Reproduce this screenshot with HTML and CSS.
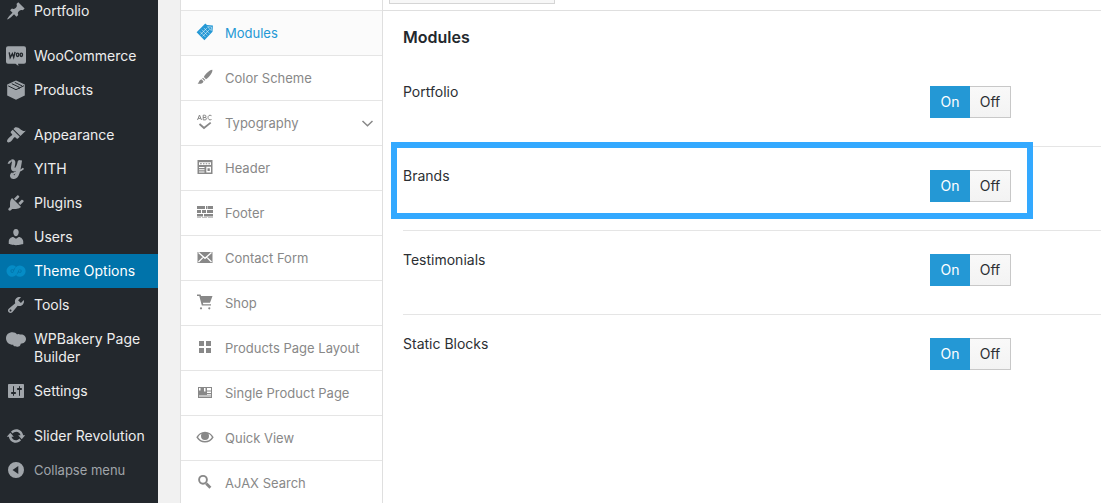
FILE: index.html
```html
<!DOCTYPE html>
<html lang="en">
<head>
<meta charset="utf-8">
<title>Theme Options</title>
<link rel="stylesheet" href="styles.css">
</head>
<body>
<div class="app">
  <nav class="admin" aria-label="Main menu">
    <ul class="admin-list">
      <li><a class="admin-link" href="#"><svg class="admin-icon" viewBox="0 0 20 20"><path d="M10.44 3.02l1.82-1.82 6.36 6.35-1.83 1.82c-1.05-.68-2.48-.57-3.41.36l-.75.75c-.92.93-1.04 2.35-.35 3.41l-1.83 1.82-2.41-2.41-2.8 2.79c-.42.42-3.38 2.71-3.8 2.29s1.86-3.39 2.28-3.81l2.79-2.79L4.1 9.36l1.83-1.82c1.05.69 2.48.57 3.4-.36l.75-.75c.93-.92 1.05-2.35.36-3.41z"/></svg><span>Portfolio</span></a></li>
      <li class="gap"><a class="admin-link" href="#"><svg class="admin-icon" viewBox="0 0 20 20"><path d="M2 .3h16a2 2 0 0 1 2 2v13.400a2 2 0 0 1-2 2h-6l.5 2.300-3-2.300H2a2 2 0 0 1-2-2V2.300a2 2 0 0 1 2-2z"/><path class="cut" d="M3.200 6.400l1 5.200 2.200-4 1.300 3.800 1.400-5.600"/><ellipse class="cut" cx="11.600" cy="8.800" rx="1.200" ry="1.700"/><ellipse class="cut" cx="15.300" cy="8.800" rx="1.200" ry="1.700"/></svg><span>WooCommerce</span></a></li>
      <li><a class="admin-link" href="#"><svg class="admin-icon" viewBox="0 0 20 20"><path d="M10 .4l8.800 4.200v10.800L10 19.800 1.200 15.400V4.600z"/><path class="cut thin" d="M2.200 5.900L10 9.700l8-4M5.800 3.700l7.400 3.500v1.600M8.800 2.400l7.300 3.500"/></svg><span>Products</span></a></li>
      <li class="gap"><a class="admin-link" href="#"><svg class="admin-icon" viewBox="0 0 20 20"><path d="M14.480 11.060L7.410 3.990l1.500-1.500c.5-.56 2.300-.47 3.510.32 1.210.8 1.430 1.280 2.910 2.100 1.180.64 2.450 1.260 4.450.85zm-.71.71L6.700 4.700 4.930 6.470c-.39.39-.39 1.020 0 1.410l1.060 1.060c.39.39.39 1.030 0 1.420-.6.6-1.430 1.110-2.210 1.690-.35.26-.7.53-1.010.84C1.430 14.230.4 16.080 1.400 17.070c.99 1 2.840-.03 4.180-1.360.31-.31.58-.66.85-1.020.57-.78 1.080-1.610 1.690-2.210.39-.39 1.020-.39 1.410 0l1.060 1.060c.39.39 1.020.39 1.410 0z"/></svg><span>Appearance</span></a></li>
      <li><a class="admin-link" href="#"><svg class="admin-icon" viewBox="0 0 20 20"><g class="stroke"><path stroke-width="3.600" d="M5.600 2.400c2-.8 2.300.5 1.700 3.200-.8 3.500-.6 5.200 1 5.200 2.300 0 4.200-3.500 5.300-8.500M14.300 1.200c-1.300 7.500-2.100 16.600-6.400 17-2.600.2-2.800-2.100-.8-3.400"/><path stroke-width="1.800" d="M2.400 4.800c.6-1.600 1.600-2.600 3-2.800M7 15c3.200-2.300 7.800-3 10.500-5.700"/></g></svg><span>YITH</span></a></li>
      <li><a class="admin-link" href="#"><svg class="admin-icon" viewBox="0 0 20 20"><path d="M13.110 4.360L9.870 7.600 8 5.730l3.240-3.240c.35-.34 1.050-.2 1.560.32.52.51.66 1.210.31 1.550zm-8 1.770l.91-1.120 9.010 9.010-1.190.84c-.71.71-2.630 1.160-3.820 1.160H6.140L4.900 17.260c-.59.59-1.540.59-2.120 0-.59-.58-.59-1.530 0-2.120l1.240-1.240v-3.880c0-1.130.4-3.190 1.090-3.890zm7.260 3.970l3.240-3.240c.34-.35 1.040-.21 1.550.31.52.51.66 1.210.31 1.550l-3.240 3.250z"/></svg><span>Plugins</span></a></li>
      <li><a class="admin-link" href="#"><svg class="admin-icon" viewBox="0 0 20 20"><path d="M10 9.250c-2.270 0-2.730-3.440-2.730-3.440C7 4.020 7.820 2 9.970 2c2.160 0 2.980 2.020 2.710 3.810 0 0-.41 3.440-2.680 3.440zm0 2.570L12.720 10c2.390 0 4.520 2.330 4.520 4.530v2.490s-3.650 1.130-7.240 1.130c-3.650 0-7.240-1.130-7.240-1.130v-2.490c0-2.250 1.940-4.480 4.470-4.480z"/></svg><span>Users</span></a></li>
      <li><a class="admin-link current" href="#" aria-current="page"><svg class="admin-icon" viewBox="0 0 20 20"><g class="stroke" stroke-width="4"><path d="M8.600 7.200a3.700 3.700 0 1 0 .2 5.400l2.400-5a3.700 3.700 0 1 1 .2 5.200"/></g><circle cx="6.300" cy="10" r="1" fill="currentColor"/><circle cx="13.800" cy="10" r="1" fill="currentColor"/></svg><span>Theme Options</span></a></li>
      <li><a class="admin-link" href="#"><svg class="admin-icon" viewBox="0 0 20 20"><path d="M16.680 9.770c-1.340 1.340-3.300 1.670-4.950.99l-5.410 6.520c-.99.99-2.590.99-3.580 0s-.99-2.590 0-3.570l6.520-5.420c-.68-1.650-.35-3.610.99-4.950 1.280-1.280 3.120-1.620 4.720-1.060l-2.890 2.890 2.820 2.820 2.860-2.870c.53 1.580.18 3.390-1.080 4.650zM3.810 16.210c.4.39 1.040.39 1.430 0 .4-.4.4-1.040 0-1.430-.39-.4-1.030-.4-1.430 0-.39.39-.39 1.030 0 1.430z"/></svg><span>Tools</span></a></li>
      <li><a class="admin-link" href="#"><svg class="admin-icon" viewBox="0 0 20 20"><path d="M6.500 3.200c2 0 3.500.8 4.600 2.200 1-.7 2-.6 3 .1 3-.6 5.900 1.300 5.900 4.500 0 2.700-2.300 4.600-5.300 4.700-.2 1.600-.7 2.500-2.200 2.700-1 .5-2.200.4-3-.1-1.300.1-2.100-.5-2.300-1.600C3 15.700 0 13 0 9.200 0 5.500 2.700 3.200 6.500 3.200z"/></svg><span>WPBakery Page Builder</span></a></li>
      <li><a class="admin-link" href="#"><svg class="admin-icon" viewBox="0 0 20 20"><path d="M18 16V4c0-.55-.45-1-1-1H3c-.55 0-1 .45-1 1v12c0 .55.45 1 1 1h14c.55 0 1-.45 1-1zM8 11h1c.55 0 1 .45 1 1s-.45 1-1 1H8v1.500c0 .28-.22.5-.5.5s-.5-.22-.5-.5V13H6c-.55 0-1-.45-1-1s.45-1 1-1h1V5.500c0-.28.22-.5.5-.5s.5.22.5.5V11zm5-2h-1c-.55 0-1-.45-1-1s.45-1 1-1h1V5.500c0-.28.22-.5.5-.5s.5.22.5.5V7h1c.55 0 1 .45 1 1s-.45 1-1 1h-1v5.500c0 .28-.22.5-.5.5s-.5-.22-.5-.5V9z"/></svg><span>Settings</span></a></li>
      <li class="gap"><a class="admin-link" href="#"><svg class="admin-icon" viewBox="0 0 20 20"><path d="M10.200 3.280c3.530 0 6.430 2.610 6.920 6h2.080l-3.500 4-3.500-4h2.320c-.45-1.970-2.210-3.450-4.320-3.450-1.450 0-2.730.71-3.540 1.780L4.950 5.660C6.230 4.200 8.110 3.280 10.200 3.280zm-.4 13.440c-3.520 0-6.430-2.610-6.920-6H.8l3.500-4c1.170 1.330 2.330 2.670 3.500 4H5.480c.45 1.970 2.210 3.450 4.320 3.450 1.450 0 2.730-.71 3.540-1.780l1.710 1.950c-1.280 1.460-3.150 2.380-5.250 2.380z"/></svg><span>Slider Revolution</span></a></li>
      <li><button class="admin-link collapse" type="button"><svg class="admin-icon" viewBox="0 0 20 20"><path fill-rule="evenodd" d="M10 2a8 8 0 1 1 0 16 8 8 0 0 1 0-16zM12.300 6L6.500 10l5.800 4z"/></svg><span>Collapse menu</span></button></li>
    </ul>
  </nav>

  <nav class="sections" aria-label="Option sections">
    <ul class="section-list">
      <li><a class="section-link active" href="#"><svg class="section-icon" viewBox="0 0 18 18"><path d="M9.300.6l1.700 1.500 5.900.4-.4 6.200L8.400 17.200.6 9.200z"/><path class="cut thin" d="M11.500 3.700l4 .3-.3 3.500-2-2zM4 8.500l5.500 5.600M5.900 6.700l5.600 5.700M7.800 4.900l5.600 5.700M4.500 11.500l6.500-6.600M6.500 13.500l7-7"/></svg><span>Modules</span></a></li>
      <li><a class="section-link" href="#"><svg class="section-icon" viewBox="0 0 18 18"><path d="M16.300 1.800c.4.500-.1 2.800-1.900 5.200-1.300 1.700-3 3.300-4.400 4.200L7.800 8.900c1-1.700 2.600-3.600 4.200-4.900 2-1.700 3.900-2.600 4.300-2.200zM7 9.700l2.300 2.200-.9.900-2.300-2.200zM5.400 11.200l2.100 2.100c-.5 2.300-3.200 3-6 2.300 1.600-.8 1.300-3.500 3.900-4.400z"/></svg><span>Color Scheme</span></a></li>
      <li><a class="section-link" href="#"><svg class="section-icon" viewBox="0 0 18 18"><g class="stroke" stroke-width="1"><path d="M1.500 7l2-5 2 5M2.200 5.400h2.600M7.200 2.200h1.600a1.100 1.100 0 0 1 0 2.300H7.200zM7.200 4.500h2a1.200 1.200 0 0 1 0 2.400h-2zM15.500 2.700c-2-1.200-3.500 0-3.500 1.800s1.500 3.100 3.500 2"/><path stroke-width="1.800" d="M3.500 11l4.500 4 6.700-5.400"/></g></svg><span class="section-name">Typography</span><svg class="chevron" viewBox="0 0 12 12"><path d="M1.500 4L6.500 8.800l5-4.800"/></svg></a></li>
      <li><a class="section-link" href="#"><svg class="section-icon" viewBox="0 0 18 18"><path fill-rule="evenodd" d="M1.500 2h15v14h-15zM3 4.300h12V7H3zM3 9h5.500v1H3zM3 11.200h5.500v1H3zM3 13.500h5.500v1H3zM10.300 8.800H15v5.700h-4.700zM11.500 10.300h2.300v2.700h-2.300z"/><path d="M4 5.200h1.800v1H4zM7 5.200h1.500v1H7zM9.700 5.200h1.500v1H9.700zM12.400 5.200h1.600v1h-1.600z"/></svg><span>Header</span></a></li>
      <li><a class="section-link" href="#"><svg class="section-icon" viewBox="0 0 18 18"><path d="M1 3h8v3H1zM10 3h1.500v3H10zM12 3h5v3h-5zM1 7h4v3H1zM6 7h4v3H6zM11 7h6v3h-6zM1 11h6v2.500H1zM8 11h9v2.500H8z"/><path opacity=".5" d="M1 14h4v1H1zM6 14h5v1H6zM12 14h5v1h-5z"/></svg><span>Footer</span></a></li>
      <li><a class="section-link" href="#"><svg class="section-icon" viewBox="0 0 18 18"><path d="M1.500 4h15v11h-15z"/><path class="cut" d="M2.500 4.500L9 10.300l6.500-5.800M2.500 14l4.800-4.900M15.500 14l-4.800-4.900"/></svg><span>Contact Form</span></a></li>
      <li><a class="section-link" href="#"><svg class="section-icon" viewBox="0 0 18 18"><path d="M1 1.400h3.500l.6 1.500H16.500L14 9.800H6.900l.3 1.400H15v1.400H5.800L3.300 2.900H1z"/><circle cx="5" cy="15.300" r="1.100"/><circle cx="13.300" cy="15.300" r="1.100"/></svg><span>Shop</span></a></li>
      <li><a class="section-link" href="#"><svg class="section-icon" viewBox="0 0 18 18"><path d="M3 3h5v5H3zM10 3h5v5h-5zM3 10h5v5H3zM10 10h5v5h-5z"/></svg><span>Products Page Layout</span></a></li>
      <li><a class="section-link" href="#"><svg class="section-icon" viewBox="0 0 18 18"><path fill-rule="evenodd" d="M2 4h14v11H2zM11 5h4v2.500h-4zM11 8.500h4v1.500h-4zM3 12.500h12v1H3zM3 5h1.500v2.500H3zM8 5h1.500v3.500H8zM11 11h4v.800h-4z"/></svg><span>Single Product Page</span></a></li>
      <li><a class="section-link" href="#"><svg class="section-icon" viewBox="0 0 18 18"><path fill-rule="evenodd" d="M.3 9.200C2.300 5.800 5.300 3.700 9 3.700s6.700 2.100 8.700 5.500c-2 3.400-5 5.300-8.700 5.300S2.300 12.600.3 9.200zM2.100 9.200C3.900 11.900 6.200 13 9 13s5.100-1.100 6.900-3.800c-1-1.600-2.200-2.700-3.500-3.400.4.700.6 1.400.6 2.200a4 4 0 1 1-8 0c0-.8.200-1.500.6-2.200-1.300.7-2.500 1.800-3.500 3.400z"/></svg><span>Quick View</span></a></li>
      <li><a class="section-link" href="#"><svg class="section-icon" viewBox="0 0 18 18"><g class="stroke"><circle cx="7" cy="6.800" r="3.900" stroke-width="1.900"/><path stroke-width="2.800" d="M10.200 10.400l4.200 4.300"/></g></svg><span>AJAX Search</span></a></li>
    </ul>
  </nav>

  <main class="content">
    <div class="toolbar"><button class="toolbar-button" type="button" aria-label="Toolbar action"></button></div>
    <div class="panel">
      <h1 class="title">Modules</h1>
      <div class="option">
        <span class="option-name" id="n1">Portfolio</span>
        <div class="switch" role="radiogroup" aria-labelledby="n1"><input type="radio" name="portfolio" id="r1a" checked><label for="r1a">On</label><input type="radio" name="portfolio" id="r1b"><label for="r1b">Off</label></div>
      </div>
      <div class="option highlighted">
        <span class="option-name" id="n2">Brands</span>
        <div class="switch" role="radiogroup" aria-labelledby="n2"><input type="radio" name="brands" id="r2a" checked><label for="r2a">On</label><input type="radio" name="brands" id="r2b"><label for="r2b">Off</label></div>
      </div>
      <div class="option">
        <span class="option-name" id="n3">Testimonials</span>
        <div class="switch" role="radiogroup" aria-labelledby="n3"><input type="radio" name="testimonials" id="r3a" checked><label for="r3a">On</label><input type="radio" name="testimonials" id="r3b"><label for="r3b">Off</label></div>
      </div>
      <div class="option">
        <span class="option-name" id="n4">Static Blocks</span>
        <div class="switch" role="radiogroup" aria-labelledby="n4"><input type="radio" name="blocks" id="r4a" checked><label for="r4a">On</label><input type="radio" name="blocks" id="r4b"><label for="r4b">Off</label></div>
      </div>
    </div>
  </main>
</div>
</body>
</html>
```
FILE: styles.css
```css
* { box-sizing: border-box; }

body {
  margin: 0;
  font: 14px/18px Inter, "Liberation Sans", sans-serif;
  color: #2c2f33;
  background: #f1f1f1;
}

ul { list-style: none; margin: 0; padding: 0; }

.app {
  display: flex;
  height: 100vh;
  overflow: hidden;
}

/* Dark admin menu */
.admin {
  flex: none;
  width: 158px;
  background: #23282d;
}

.admin-list { margin-top: -6px; }
.gap { margin-top: 11px; }

.admin-link {
  display: flex;
  gap: 8px;
  width: 100%;
  padding: 8px 8px 8px 6px;
  border: 0;
  background: none;
  color: #eee;
  font: inherit;
  text-align: left;
  text-decoration: none;
}

.admin-icon {
  flex: none;
  width: 20px;
  height: 20px;
  margin: -1px 0;
  fill: #a0a5aa;
  color: #a0a5aa;
}

.current { background: #0073aa; color: #fff; }
.current .admin-icon { color: #058cc6; }
.collapse { color: #a0a5aa; font-size: 13px; }

.stroke { fill: none; stroke: currentColor; }
.admin .cut { fill: none; stroke: #23282d; stroke-width: 1.4; }
.admin .thin { stroke-width: 1; }

/* Section tabs */
.sections {
  flex: none;
  width: 203px;
  margin-left: 22px;
  border: solid #dfdfdf;
  border-width: 0 1px;
  background: #fff;
}

.section-list { padding-top: 10px; }
.section-list li { border-top: 1px solid #e5e5e5; }

.section-link {
  display: flex;
  align-items: center;
  gap: 11px;
  height: 44px;
  padding: 0 9px 0 15px;
  color: #888;
  font-size: 13px;
  text-decoration: none;
}

.section-icon {
  flex: none;
  width: 18px;
  height: 18px;
  margin-bottom: 2px;
  fill: currentColor;
}

.active { background: #fbfbfb; color: #2498d5; }
.sections .cut { fill: none; stroke: #fff; stroke-width: 1.3; }
.sections .thin { stroke-width: 1; stroke-opacity: 0.5; }
.section-name { flex: 1; }

.chevron {
  width: 12px;
  height: 12px;
  fill: none;
  stroke: currentColor;
  stroke-width: 1.5;
}

/* Settings */
.content {
  flex: 1;
  min-width: 0;
  background: #fff;
}

.toolbar {
  height: 11px;
  padding-left: 6px;
  border-bottom: 1px solid #dfdfdf;
}

.toolbar-button {
  display: block;
  width: 166px;
  height: 4px;
  padding: 0;
  border: solid #d5d5d5;
  border-width: 0 1px 1px;
  background: #f7f7f7;
}

.panel { padding-left: 20px; }

.title {
  margin: 0;
  padding: 14px 0;
  font-size: 16px;
  line-height: 24px;
  font-weight: 600;
  color: #23282d;
}

.option {
  position: relative;
  display: flex;
  justify-content: space-between;
  align-items: flex-start;
  padding: 20px 90px 28px 0;
}

.option + .option { border-top: 1px solid #e5e5e5; }

.highlighted::after {
  content: "";
  position: absolute;
  inset: -5px 68px 11px -12px;
  border: 6px solid #33a9ff;
  pointer-events: none;
}

.switch { display: flex; padding-top: 3px; }

.switch input {
  position: absolute;
  opacity: 0;
}

.switch label {
  width: 41px;
  height: 32px;
  border: 1px solid #c8c8c8;
  border-left: 0;
  background: linear-gradient(#f9f9f9, #f3f3f3);
  line-height: 30px;
  text-align: center;
  cursor: pointer;
}

.switch label:first-of-type { width: 40px; border-left: 1px solid; }

.switch input:checked + label {
  border-color: #2498d5;
  background: #2498d5;
  color: #fff;
}

.switch input:focus-visible + label { outline: 2px solid #0073aa; }
```
